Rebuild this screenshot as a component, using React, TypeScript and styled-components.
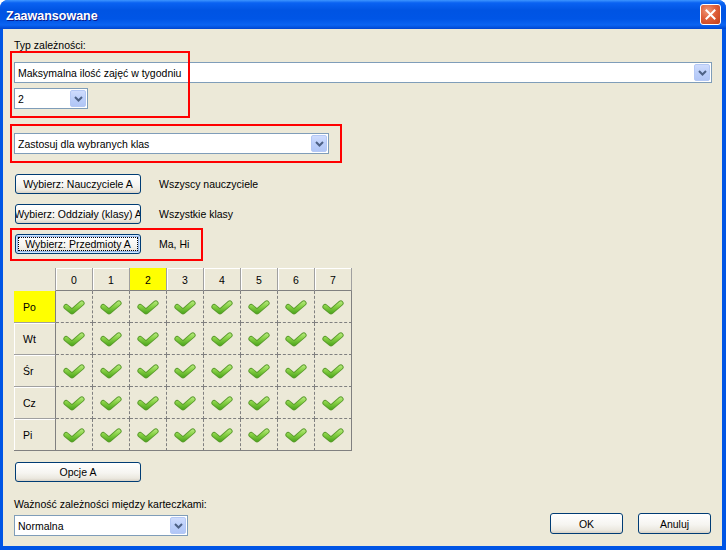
import React from "react"
import styled, { createGlobalStyle } from "styled-components"

const GlobalStyle = createGlobalStyle`
  html, body {
    margin: 0;
    padding: 0;
    background: #ffffff;
  }
  body {
    font-family: "Liberation Sans", Arial, sans-serif;
    font-size: 10.5px;
    color: #000;
  }
`

const Window = styled.div`
  width: 726px;
  height: 550px;
  display: flex;
  flex-direction: column;
  background: #0055e5;
  border-radius: 8px 8px 0 0;
  overflow: hidden;
  box-sizing: border-box;
`

const TitleBar = styled.div`
  height: 29px;
  flex-shrink: 0;
  display: flex;
  align-items: center;
  justify-content: space-between;
  padding: 0 5px 0 6px;
  background: linear-gradient(
    180deg,
    #3d95ff 0%,
    #0a62f2 10%,
    #0054e3 35%,
    #0055e6 65%,
    #0b64f2 86%,
    #0046d0 100%
  );
`

const Title = styled.span`
  font-family: "Liberation Sans", Arial, sans-serif;
  font-weight: bold;
  font-size: 12.5px;
  color: #fff;
  text-shadow: 1px 1px 0 #0a1b8c;
  padding-top: 2px;
`

const CloseButton = styled.div`
  width: 21px;
  height: 21px;
  box-sizing: border-box;
  border: 1px solid #fff;
  border-radius: 3px;
  background: radial-gradient(circle at 35% 30%, #f09878 0%, #df5f3a 45%, #c23d17 100%);
  display: flex;
  align-items: center;
  justify-content: center;
`

const Body = styled.div`
  flex: 1;
  position: relative;
  margin: 0 4px 4px 3px;
  background: #ece9d8;
  display: flex;
  flex-direction: column;
  padding: 10px 9px 10px 11px;
`

const Label = styled.div`
  line-height: 13px;
  height: 13px;
  white-space: nowrap;
`

const ComboBox = styled.div<{ $w: number; $gap?: number }>`
  width: ${(p) => p.$w}px;
  height: 21px;
  margin-top: ${(p) => p.$gap ?? 0}px;
  box-sizing: border-box;
  border: 1px solid #7f9db9;
  background: #fff;
  display: flex;
  align-items: center;
  padding: 0 1px 0 3px;
`

const ComboText = styled.span`
  flex: 1;
  white-space: nowrap;
  overflow: hidden;
`

const ComboArrow = styled.span`
  width: 16px;
  height: 17px;
  box-sizing: border-box;
  border: 1px solid #b4c8f5;
  border-radius: 2px;
  background: linear-gradient(180deg, #cfdcfd 0%, #bccffa 50%, #b1c6f6 100%);
  display: flex;
  align-items: center;
  justify-content: center;
`

const PickRow = styled.div<{ $gap: number }>`
  display: flex;
  align-items: center;
  gap: 18px;
  margin-top: ${(p) => p.$gap}px;
  padding-left: 1px;
`

const XpButton = styled.div<{ $w: number; $h?: number; $focus?: boolean }>`
  width: ${(p) => p.$w}px;
  height: ${(p) => p.$h ?? 20}px;
  box-sizing: border-box;
  border: 1px solid #003c74;
  border-radius: 3px;
  background: linear-gradient(180deg, #ffffff 0%, #f6f5f1 55%, #ebe8df 85%, #d8d2c6 100%);
  display: flex;
  align-items: center;
  justify-content: center;
  overflow: hidden;
  flex-shrink: 0;
  ${(p) =>
    p.$focus
      ? `
    box-shadow: inset 0 0 0 1px #cee7ff, inset 0 0 0 2px #98b8ea;
    outline: 1px dotted #000;
    outline-offset: -4px;
  `
      : ""}
`

const ButtonLabel = styled.span`
  white-space: nowrap;
  flex-shrink: 0;
`

const Grid = styled.div`
  display: grid;
  grid-template-columns: 42px repeat(8, 37px);
  grid-template-rows: 23px repeat(5, 32px);
  width: max-content;
  margin-top: 14px;
`

const Corner = styled.div`
  border-right: 1px solid #a0a0a0;
`

const ColHead = styled.div<{ $hl?: boolean }>`
  box-sizing: border-box;
  background: ${(p) => (p.$hl ? "#ffff00" : "#ece9d8")};
  border-right: 1px solid #a0a0a0;
  border-bottom: 1px solid #808080;
  box-shadow: ${(p) => (p.$hl ? "none" : "inset 1px 1px 0 #ffffff")};
  display: flex;
  align-items: center;
  justify-content: center;
  padding-top: 1px;
`

const RowHead = styled.div<{ $hl?: boolean; $last?: boolean }>`
  box-sizing: border-box;
  background: ${(p) => (p.$hl ? "#ffff00" : "#ece9d8")};
  border-right: 1px solid #808080;
  border-bottom: 1px solid ${(p) => (p.$last ? "#808080" : "#a0a0a0")};
  box-shadow: ${(p) => (p.$hl ? "none" : "inset 1px 1px 0 #ffffff")};
  display: flex;
  align-items: center;
  padding-left: 9px;
`

const Cell = styled.div<{ $lastCol?: boolean; $lastRow?: boolean }>`
  box-sizing: border-box;
  border-right: 1px ${(p) => (p.$lastCol ? "solid" : "dashed")} #808080;
  border-bottom: 1px ${(p) => (p.$lastRow ? "solid" : "dashed")} #808080;
  display: flex;
  align-items: center;
  justify-content: center;
  padding-top: 1px;
`

const Footer = styled.div`
  margin-top: auto;
  display: flex;
  justify-content: space-between;
  align-items: flex-end;
`

const FooterLeft = styled.div`
  display: flex;
  flex-direction: column;
  gap: 4px;
`

const DialogButtons = styled.div`
  display: flex;
  gap: 15px;
  margin: 0 2px 2px 0;
`

const Highlight = styled.div<{ $x: number; $y: number; $w: number; $h: number }>`
  position: absolute;
  left: ${(p) => p.$x}px;
  top: ${(p) => p.$y}px;
  width: ${(p) => p.$w}px;
  height: ${(p) => p.$h}px;
  box-sizing: border-box;
  border: 2px solid #ff0000;
  pointer-events: none;
`

function Chevron() {
  return (
    <svg width="9" height="6" viewBox="0 0 9 6">
      <polyline
        points="1,1 4.5,4.5 8,1"
        fill="none"
        stroke="#4d6185"
        strokeWidth="2"
      />
    </svg>
  )
}

function Combo({ w, gap, text }: { w: number; gap?: number; text: string }) {
  return (
    <ComboBox $w={w} $gap={gap}>
      <ComboText>{text}</ComboText>
      <ComboArrow>
        <Chevron />
      </ComboArrow>
    </ComboBox>
  )
}

function CheckIcon() {
  return (
    <svg width="22" height="15" viewBox="0 0 22 15">
      <defs>
        <linearGradient id="chkFill" x1="0" y1="0" x2="0" y2="15" gradientUnits="userSpaceOnUse">
          <stop offset="0" stopColor="#c2f08a" />
          <stop offset="0.45" stopColor="#85d043" />
          <stop offset="1" stopColor="#3f9b14" />
        </linearGradient>
      </defs>
      <path
        d="M3.2 6.8 L9 11.6 L18.8 3.2"
        fill="none"
        stroke="#5a9a2c"
        strokeWidth="5.6"
        strokeLinecap="round"
        strokeLinejoin="round"
      />
      <path
        d="M3.2 6.8 L9 11.6 L18.8 3.2"
        fill="none"
        stroke="url(#chkFill)"
        strokeWidth="3.8"
        strokeLinecap="round"
        strokeLinejoin="round"
      />
    </svg>
  )
}

const hours = [0, 1, 2, 3, 4, 5, 6, 7]
const days = ["Po", "Wt", "Śr", "Cz", "Pi"]

export default function App() {
  return (
    <>
      <GlobalStyle />
      <Window>
        <TitleBar>
          <Title>Zaawansowane</Title>
          <CloseButton>
            <svg width="11" height="11" viewBox="0 0 11 11">
              <path d="M1.5 1.5 L9.5 9.5 M9.5 1.5 L1.5 9.5" stroke="#fff" strokeWidth="2" strokeLinecap="square" />
            </svg>
          </CloseButton>
        </TitleBar>
        <Body>
          <Label>Typ zależności:</Label>
          <Combo w={698} gap={10} text="Maksymalna ilość zajęć w tygodniu" />
          <Combo w={74} gap={5} text="2" />
          <Combo w={315} gap={24} text="Zastosuj dla wybranych klas" />

          <PickRow $gap={20}>
            <XpButton $w={126}>
              <ButtonLabel>Wybierz: Nauczyciele A</ButtonLabel>
            </XpButton>
            <span>Wszyscy nauczyciele</span>
          </PickRow>
          <PickRow $gap={10}>
            <XpButton $w={126}>
              <ButtonLabel>Wybierz: Oddziały (klasy) A</ButtonLabel>
            </XpButton>
            <span>Wszystkie klasy</span>
          </PickRow>
          <PickRow $gap={10}>
            <XpButton $w={126} $focus>
              <ButtonLabel>Wybierz: Przedmioty A</ButtonLabel>
            </XpButton>
            <span>Ma, Hi</span>
          </PickRow>

          <Grid>
            <Corner />
            {hours.map((h) => (
              <ColHead key={h} $hl={h === 2}>
                {h}
              </ColHead>
            ))}
            {days.map((d, r) => (
              <React.Fragment key={d}>
                <RowHead $hl={r === 0} $last={r === days.length - 1}>
                  {d}
                </RowHead>
                {hours.map((h) => (
                  <Cell key={h} $lastCol={h === 7} $lastRow={r === days.length - 1}>
                    <CheckIcon />
                  </Cell>
                ))}
              </React.Fragment>
            ))}
          </Grid>

          <PickRow $gap={11}>
            <XpButton $w={126}>
              <ButtonLabel>Opcje A</ButtonLabel>
            </XpButton>
          </PickRow>

          <Footer>
            <FooterLeft>
              <Label>Ważność zależności między karteczkami:</Label>
              <Combo w={174} text="Normalna" />
            </FooterLeft>
            <DialogButtons>
              <XpButton $w={73} $h={21}>
                <ButtonLabel>OK</ButtonLabel>
              </XpButton>
              <XpButton $w={73} $h={21}>
                <ButtonLabel>Anuluj</ButtonLabel>
              </XpButton>
            </DialogButtons>
          </Footer>

          <Highlight $x={7} $y={22} $w={180} $h={67} />
          <Highlight $x={7} $y={95} $w={332} $h={39} />
          <Highlight $x={7} $y={199} $w={193} $h={33} />
        </Body>
      </Window>
    </>
  )
}
